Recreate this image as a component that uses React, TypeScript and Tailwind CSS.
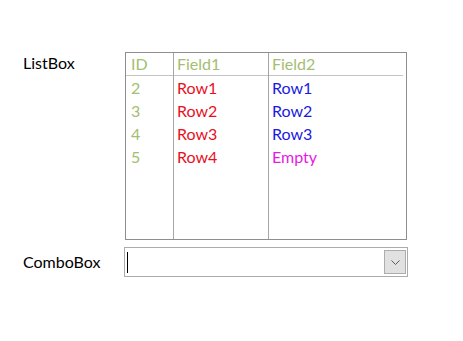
import React from 'react';

const rows = [
  { id: '2', f1: 'Row1', f2: 'Row1', c2: 'text-[#1a1ae0]' },
  { id: '3', f1: 'Row2', f2: 'Row2', c2: 'text-[#1a1ae0]' },
  { id: '4', f1: 'Row3', f2: 'Row3', c2: 'text-[#1a1ae0]' },
  { id: '5', f1: 'Row4', f2: 'Empty', c2: 'text-[#e619e6]' },
];

export default function App() {
  return (
    <div className="w-[463px] h-[341px] bg-white pt-[52px] pl-[23px] font-['Lato','Liberation_Sans',sans-serif] text-[16px] text-black">
      <div className="flex items-start">
        <div className="w-[102px] pt-px leading-[20px]">ListBox</div>
        <div className="flex w-[282px] h-[188px] border border-[#8e8e8e]">
          <div className="w-[48px] border-r border-[#a6a6a6] h-[186px]">
            <div className="h-[23px] leading-[22px] pl-[5px] border-b border-[#c4c4c4] text-[#a4bd72]">ID</div>
            {rows.map((r) => (
              <div key={r.id} className="h-[23px] leading-[23px] pl-[5px] text-[#a4bd72]">{r.id}</div>
            ))}
          </div>
          <div className="w-[95px] border-r border-[#a6a6a6] h-[186px]">
            <div className="h-[23px] leading-[22px] pl-[3px] border-b border-[#c4c4c4] text-[#a4bd72]">Field1</div>
            {rows.map((r) => (
              <div key={r.id} className="h-[23px] leading-[23px] pl-[3px] text-[#e8101e]">{r.f1}</div>
            ))}
          </div>
          <div className="flex-1 h-[186px]">
            <div className="h-[23px] leading-[22px] pl-[3px] mr-[3px] border-b border-[#c4c4c4] text-[#a4bd72]">Field2</div>
            {rows.map((r) => (
              <div key={r.id} className={`h-[23px] leading-[23px] pl-[3px] ${r.c2}`}>{r.f2}</div>
            ))}
          </div>
        </div>
      </div>

      <div className="flex items-center mt-[7px]">
        <div className="w-[101px] leading-[20px]">ComboBox</div>
        <div className="flex items-center justify-between w-[284px] h-[30px] border border-[#ababab] pl-[2px] pr-px">
          <div className="w-px h-[21px] bg-black" />
          <div className="flex items-center justify-center w-[22px] h-[24px] bg-[#e1e1e1] border border-[#adadad]">
            <svg width="9" height="5" viewBox="0 0 9 5" fill="none">
              <path d="M0.5 0.5 L4.5 4.5 L8.5 0.5" stroke="#5a5a5a" strokeWidth="1" />
            </svg>
          </div>
        </div>
      </div>
    </div>
  );
}
